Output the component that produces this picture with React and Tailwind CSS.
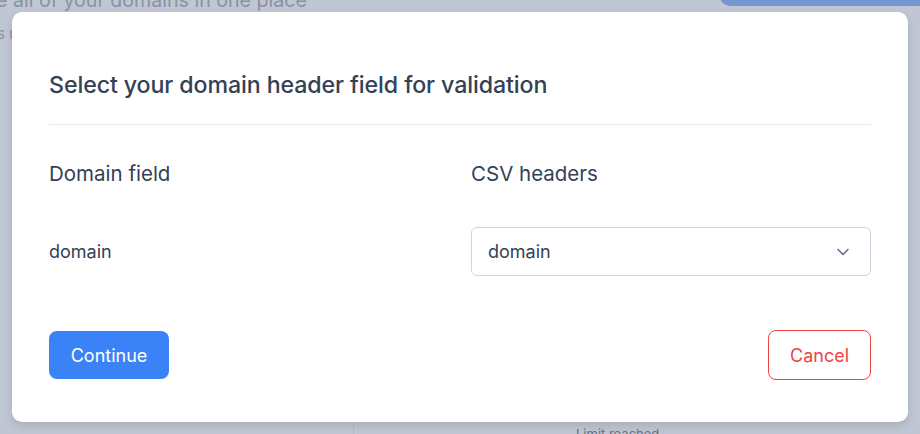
import React from "react";

export default function App() {
  return (
    <div
      className="relative h-[434px] w-[920px] overflow-hidden bg-[#c0c6d3]"
      style={{ fontFamily: "Inter, 'Noto Sans', sans-serif" }}
    >
      {/* background page (dimmed) */}
      <div className="flex h-full flex-col">
        <div className="flex items-start justify-between">
          <div className="flex flex-col">
            <div className="-ml-[4px] -mt-[12px] text-[19.6px] leading-[24px] text-[#8a92a4]">
              e all of your domains in one place
            </div>
            <div className="-ml-[3px] mt-[13px] text-[15px] leading-[18px] text-[#8a92a4]">s r</div>
          </div>
          <div className="-mt-[30px] h-[36px] w-[200px] rounded-bl-[10px] bg-[#7496d0]" />
        </div>
        <div className="mt-auto flex h-[12px]">
          <div className="w-[353px]" />
          <div className="flex-1 border-l border-[#b3b9c6] pl-[222px] text-[13px] leading-[24px] text-[#6b7280]">
            Limit reached
          </div>
        </div>
      </div>

      {/* modal */}
      <div className="absolute left-[12px] top-[12px] w-[896px] rounded-[10px] bg-white px-[37px] pb-[42px] pt-[58px] shadow-[0_4px_10px_rgba(0,0,0,0.12)]">
        <h2 className="text-[23.2px] font-medium leading-[30px] tracking-[-0.1px] text-[#334155]">
          Select your domain header field for validation
        </h2>
        <div className="mt-[24px] h-px bg-[#e5e7eb]" />
        <div className="mt-[34px] grid grid-cols-2 gap-x-[22px]">
          <div className="text-[20.5px] leading-[30px] text-[#334155]">Domain field</div>
          <div className="text-[20.5px] leading-[30px] text-[#334155]">CSV headers</div>
          <div className="mt-[38px] flex h-[49px] items-center text-[18px] text-[#334155]">domain</div>
          <div className="mt-[38px] flex h-[49px] items-center justify-between rounded-[6px] border border-[#cbd5e1] pl-[16px] pr-[17px] text-[18px] text-[#334155]">
            <span>domain</span>
            <svg width="20" height="20" viewBox="0 0 24 24" fill="none" stroke="#64748b" strokeWidth="2" strokeLinecap="round" strokeLinejoin="round">
              <path d="M6 9l6 6 6-6" />
            </svg>
          </div>
        </div>
        <div className="mt-[54px] flex items-center justify-between">
          <button className="h-[48px] w-[120px] rounded-[8px] bg-[#3b82f6] text-[18px] text-white">
            Continue
          </button>
          <button className="h-[50px] w-[103px] rounded-[8px] border border-[#ef4444] bg-white text-[18px] text-[#ef4444]">
            Cancel
          </button>
        </div>
      </div>
    </div>
  );
}
